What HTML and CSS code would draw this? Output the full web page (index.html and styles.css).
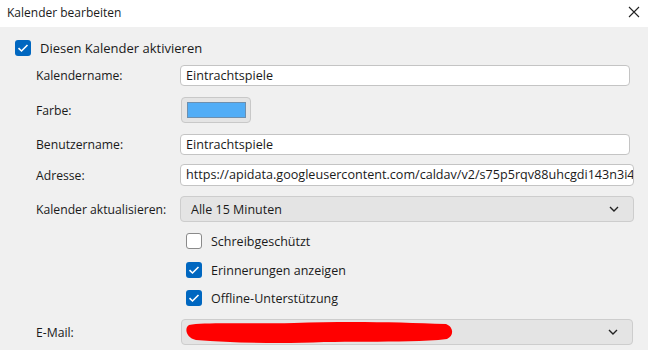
FILE: index.html
```html
<!DOCTYPE html>
<html lang="de">
<head>
    <meta charset="UTF-8">
    <title>Kalender bearbeiten</title>
    <link rel="stylesheet" href="styles.css">
</head>
<body>
    <div class="titlebar">
        <span class="title">Kalender bearbeiten</span>
        <svg class="close" width="12" height="12" viewBox="0 0 12 12">
            <path d="M1 1 L11 11 M11 1 L1 11" stroke="#222" stroke-width="1.1" fill="none"/>
        </svg>
    </div>

    <div class="main">
        <label class="check enable">
            <span class="box checked">
                <svg width="16" height="16" viewBox="0 0 16 16"><path d="M3.5 8.2 L6.5 11 L12.5 5" stroke="#fff" stroke-width="1.6" fill="none"/></svg>
            </span>
            Diesen Kalender aktivieren
        </label>

        <div class="form">
            <div class="row r-name">
                <span class="label">Kalendername:</span>
                <div class="field narrow">Eintrachtspiele</div>
            </div>
            <div class="row r-color">
                <span class="label">Farbe:</span>
                <div class="colorbtn"><div class="swatch"></div></div>
            </div>
            <div class="row r-user">
                <span class="label">Benutzername:</span>
                <div class="field narrow">Eintrachtspiele</div>
            </div>
            <div class="row r-addr">
                <span class="label">Adresse:</span>
                <div class="field wide">https://apidata.googleusercontent.com/caldav/v2/s75p5rqv88uhcgdi143n3i4</div>
            </div>
            <div class="row r-refresh">
                <span class="label">Kalender aktualisieren:</span>
                <div class="select">
                    <span>Alle 15 Minuten</span>
                    <svg class="chev" width="10" height="6" viewBox="0 0 10 6"><path d="M1 1 L5 5 L9 1" stroke="#222" stroke-width="1.4" fill="none"/></svg>
                </div>
            </div>

            <div class="opts">
                <label class="check c1">
                    <span class="box"></span>
                    Schreibgeschützt
                </label>
                <label class="check c2">
                    <span class="box checked">
                        <svg width="16" height="16" viewBox="0 0 16 16"><path d="M3.5 8.2 L6.5 11 L12.5 5" stroke="#fff" stroke-width="1.6" fill="none"/></svg>
                    </span>
                    Erinnerungen anzeigen
                </label>
                <label class="check c3">
                    <span class="box checked">
                        <svg width="16" height="16" viewBox="0 0 16 16"><path d="M3.5 8.2 L6.5 11 L12.5 5" stroke="#fff" stroke-width="1.6" fill="none"/></svg>
                    </span>
                    Offline-Unterstützung
                </label>
            </div>

            <div class="row r-mail">
                <span class="label">E-Mail:</span>
                <div class="select mail">
                    <svg class="scribble" width="272" height="26" viewBox="0 0 272 26">
                        <path d="M5 6 C20 3 60 5 110 4 C160 2 215 3 262 5 C270 8 270 17 263 20 C230 24 180 22 140 23 C100 25 50 24 12 21 C2 19 0 9 5 6 Z" fill="#f00"/>
                    </svg>
                    <svg class="chev" width="10" height="6" viewBox="0 0 10 6"><path d="M1 1 L5 5 L9 1" stroke="#222" stroke-width="1.4" fill="none"/></svg>
                </div>
            </div>
        </div>
    </div>
</body>
</html>
```

FILE: styles.css
```css
body {
    margin: 0;
    background: #f0f0f0;
    font-family: 'Open Sans', sans-serif;
    font-size: 12.2px;
    color: #1a1a1a;
    width: 648px;
    height: 350px;
    overflow: hidden;
}

.titlebar {
    height: 27px;
    background: #fff;
    display: flex;
    align-items: center;
    justify-content: space-between;
    padding: 0 8px 3px 7px;
    box-sizing: border-box;
}

.title {
    font-size: 12px;
}

.main {
    padding-left: 15px;
}

.check {
    display: flex;
    align-items: center;
    height: 16px;
    gap: 9px;
}

.enable {
    margin-top: 13px;
    font-size: 13px;
}

.box {
    width: 16px;
    height: 16px;
    box-sizing: border-box;
    border: 1px solid #8a8a8a;
    border-radius: 3px;
    background: #fff;
    display: block;
}

.box.checked {
    border: none;
    background: #0067c0;
}

.box svg {
    display: block;
}

.form {
    margin-left: 21px;
}

.row {
    display: flex;
    align-items: center;
}

.label {
    width: 144px;
    flex: none;
}

.field {
    height: 21px;
    box-sizing: border-box;
    background: #fff;
    border: 1px solid #c4c4c4;
    border-radius: 4px;
    padding: 0 5px;
    font-size: 12.6px;
    line-height: 19px;
    white-space: nowrap;
    overflow: hidden;
}

.field.narrow {
    width: 450px;
}

.field.wide {
    width: 454px;
    height: 22px;
    line-height: 20px;
}

.r-name { margin-top: 9px; }
.r-color { margin-top: 11px; }
.r-user { margin-top: 11px; }
.r-addr { margin-top: 9px; }
.r-refresh { margin-top: 10px; }
.r-mail { margin-top: 13px; }

.colorbtn {
    width: 70px;
    height: 26px;
    margin-left: 1px;
    box-sizing: border-box;
    border: 1px solid #c8c8c8;
    border-radius: 4px;
    background: #e4e4e4;
    display: flex;
    align-items: center;
    justify-content: center;
}

.swatch {
    width: 59px;
    height: 16px;
    box-sizing: border-box;
    background: #51adf6;
    border: 1px solid #6d8fae;
}

.select {
    width: 454px;
    height: 26px;
    box-sizing: border-box;
    background: #e4e4e4;
    border: 1px solid #cdcdcd;
    border-radius: 4px;
    display: flex;
    align-items: center;
    justify-content: space-between;
    padding: 0 14px 0 10px;
    font-size: 12.5px;
}

.select.mail {
    width: 452px;
    margin-left: 1px;
    padding-left: 2px;
}

.scribble {
    display: block;
}

.opts {
    margin-left: 150px;
    font-size: 12.5px;
}

.c1 { margin-top: 11px; }
.c2 { margin-top: 13px; }
.c3 { margin-top: 12px; }
```
